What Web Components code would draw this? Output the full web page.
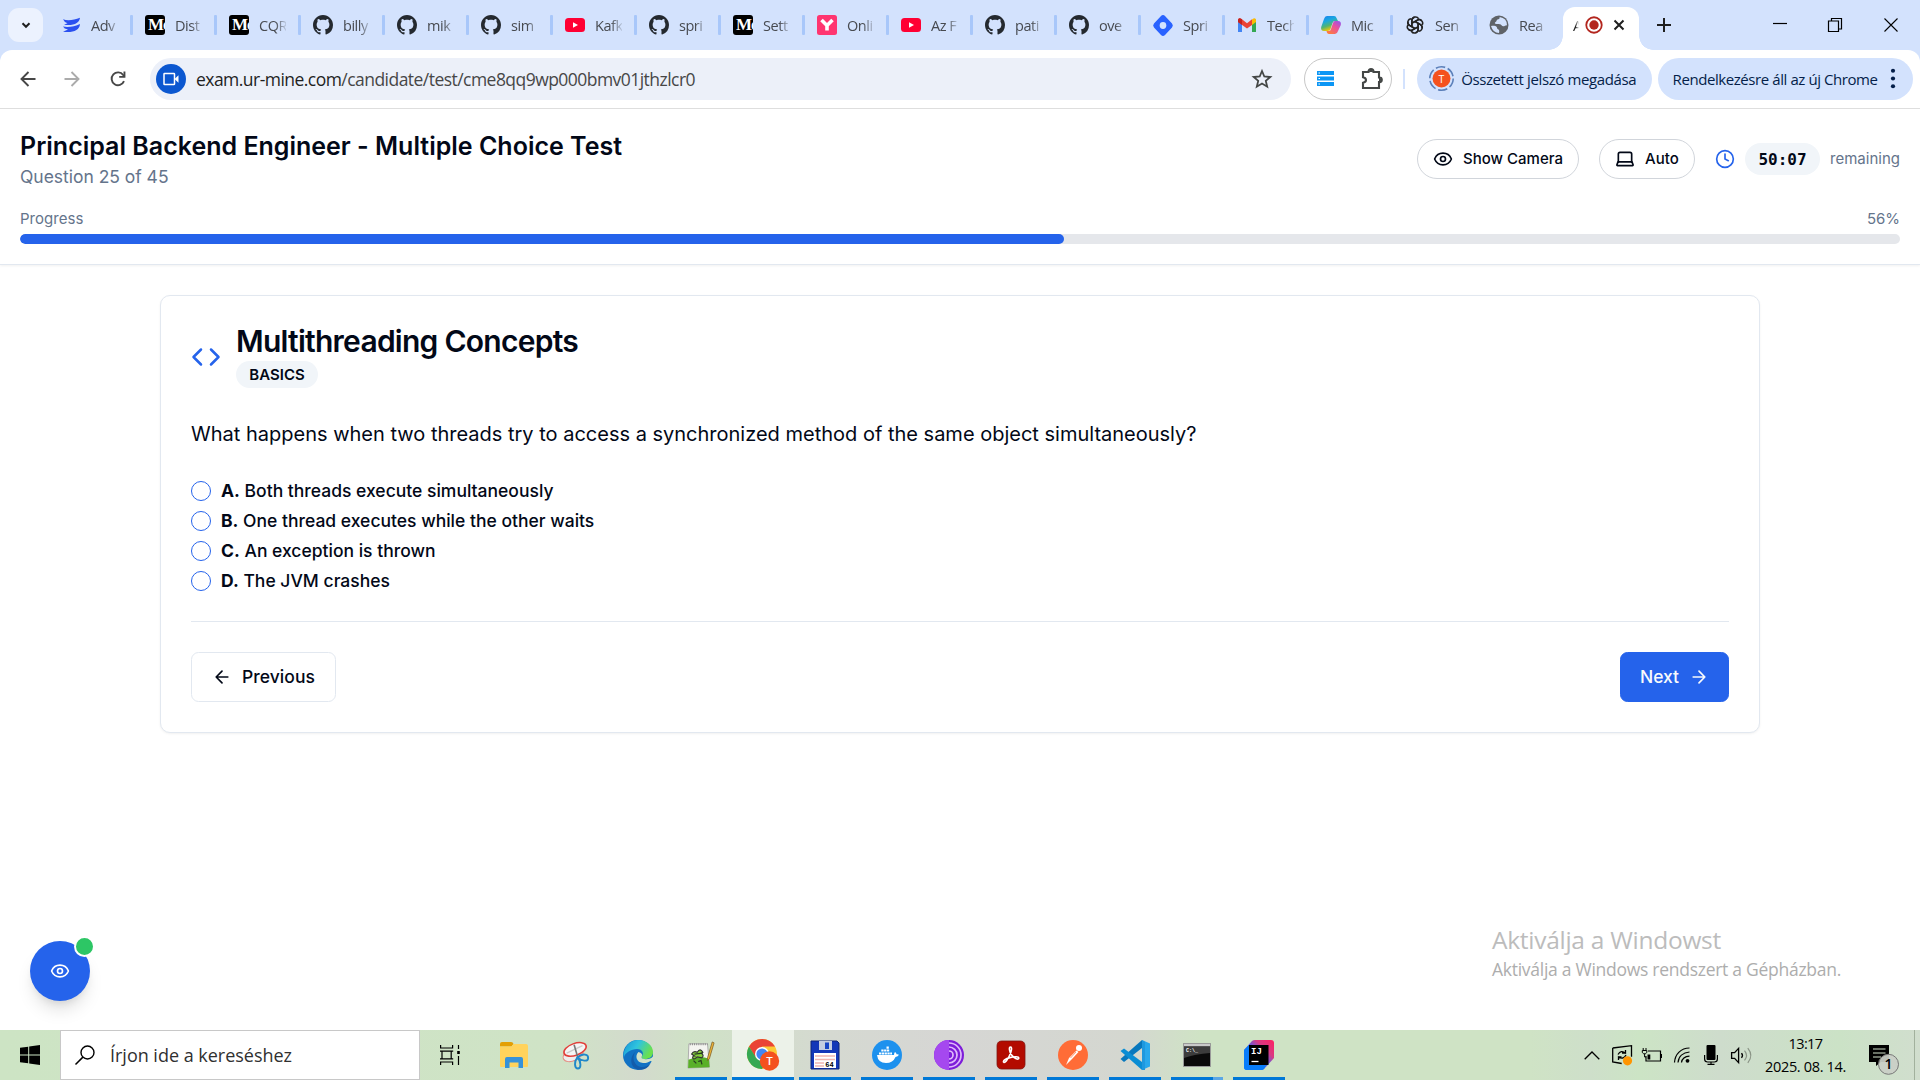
<!DOCTYPE html>
<html lang="hu">
<head>
<meta charset="utf-8">
<title>Principal Backend Engineer - Multiple Choice Test</title>
<style>
html,body{margin:0;height:100%;overflow:hidden;background:#fff}
</style>
</head>
<body>
<desktop-screen></desktop-screen>
<script>
const SEG = '"Open Sans","Noto Sans",sans-serif';
const INTER = 'Inter,"Liberation Sans",sans-serif';
const L = (p, sw = 2) => `<g fill="none" stroke="currentColor" stroke-width="${sw}" stroke-linecap="round" stroke-linejoin="round">${p}</g>`;
const ICONS = {
  chevron: ['0 0 24 24', '<path d="M5 8.500l7 7 7-7" fill="none" stroke="currentColor" stroke-width="4"/>'],
  confluence: ['0 0 20 20', '<path d="M2 4.300C7 6.200 13 5 19 2.800 18.500 8 13 11 3 9.800L6.500 8.200Q3 7 2 4.300z" fill="#2a50f0"/><path d="M2 11.500C7 12.500 14 11.500 19 9 18.500 15.500 12 18 2 16.800L7 14.600Q3 13.800 2 11.500z" fill="#2a50f0"/>'],
  github: ['0 0 16 16', '<path fill="#24292f" d="M8 0C3.580 0 0 3.580 0 8c0 3.540 2.290 6.530 5.470 7.590.4.070.55-.17.55-.38 0-.19-.010-.82-.010-1.490-2.010.37-2.530-.49-2.690-.94-.09-.23-.48-.94-.82-1.130-.28-.15-.68-.52-.010-.53.63-.010 1.080.58 1.230.82.72 1.210 1.870.87 2.330.66.070-.52.28-.87.51-1.070-1.780-.2-3.640-.89-3.640-3.950 0-.87.31-1.590.82-2.150-.080-.2-.36-1.020.080-2.120 0 0 .67-.21 2.200.82.64-.18 1.320-.27 2-.27s1.360.09 2 .27c1.530-1.040 2.200-.82 2.200-.82.44 1.100.16 1.920.080 2.120.51.56.82 1.270.82 2.150 0 3.070-1.870 3.750-3.650 3.950.29.25.54.73.54 1.480 0 1.070-.010 1.930-.010 2.200 0 .21.15.46.55.38A8.013 8.013 0 0 0 16 8c0-4.420-3.580-8-8-8z"/>'],
  youtube: ['0 0 20 20', '<rect y="3" width="20" height="14" rx="3.500" fill="#ff0033"/><path d="M8 7.200v5.600l5-2.800z" fill="#fff"/>'],
  ybox: ['0 0 20 20', '<rect width="20" height="20" rx="2.500" fill="#ff3570"/><path d="M4.500 5 10 10.500 15.500 5M10 10v5.500" stroke="#fff" stroke-width="3.600" fill="none"/>'],
  jira: ['0 0 20 20', '<path d="M10 0q1.200 0 2 .9l7 7.200q1.700 1.900 0 3.800l-7 7.200q-2 1.800-4 0L1 11.900q-1.700-1.900 0-3.800L8 .9q.8-.9 2-.9z" fill="#2962ff"/><circle cx="10" cy="10" r="3.300" fill="#d3e2fd"/>'],
  gmail: ['0 0 20 20', '<path d="M1 4v13h4V9z" fill="#4285f4"/><path d="M15 9v8h4V4z" fill="#34a853"/><path d="M15 4.500V10l4-3V5q-.5-3-4-.5z" fill="#fbbc04"/><path d="M1 5v2l9 6.500L15 10V4.300L10 8.200 5 4.300Q1.500 2 1 5z" fill="#ea4335"/><path d="M1 5v2l4 3V4.300Q1.500 2 1 5z" fill="#c5221f"/>'],
  copilot: ['0 0 20 20', '<defs><linearGradient id="a" x2=".4" y2="1"><stop stop-color="#1a7ef0"/><stop offset=".4" stop-color="#1aa8e0"/><stop offset=".7" stop-color="#52b471"/><stop offset="1" stop-color="#ffc800"/></linearGradient><linearGradient id="b" x1="1" x2=".2" y2="1"><stop stop-color="#8b55f5"/><stop offset=".45" stop-color="#e8509f"/><stop offset="1" stop-color="#ff7f3a"/></linearGradient></defs><path d="M6 1h7q2 0 2.500 2L17 6h-3q-2 0-2.500 2L9.500 14q-.5 2-3 2H3q-3.500 0-2.800-4L3 4q.8-3 3-3z" fill="url(#a)"/><path d="M14 6h3q3.500 0 2.800 4L17 16q-.8 3-3 3H8q-2 0-2.500-3H8q1.600 0 2-2l2-6q.6-2 2-2z" fill="url(#b)"/>'],
  openai: ['0 0 24 24', '<g fill="none" stroke="#222" stroke-width="1.800">' + [0,60,120,180,240,300].map(a => `<path transform="rotate(${a} 12 12)" d="M8.300 14V6.500a4.300 4.300 0 0 1 8-2M8.300 9.800l6.500-3.700a4.300 4.300 0 0 1 5 .6"/>`).join('') + '</g>'],
  globe: ['0 0 20 20', '<circle cx="10" cy="10" r="9.500" fill="#5f6368"/><path d="M2 11c2-.5 4.500-.4 5.500.7s.2 2 1.500 2.600 1.500 1.200 1 3.700Q4 18 2 11zM10.500 2c.8 1.500-.8 2.200-2 2.500s-.7 2-1.900 2.600S5.500 9 7.500 9s4-.2 5 1.300 2.500 1 3.500.4 1.500-.2 2-.5Q18 3 10.500 2z" fill="#d3e2fd"/>'],
  record: ['0 0 20 20', '<circle cx="10" cy="10" r="8.600" fill="none" stroke="#b3261e" stroke-width="2"/><circle cx="10" cy="10" r="5.200" fill="#b3261e"/>'],
  close: ['0 0 12 12', '<path d="M1.500 1.500l9 9m0-9l-9 9" stroke="currentColor" stroke-width="2"/>'],
  plus: ['0 0 14 14', '<path d="M7 0v14M0 7h14" stroke="currentColor" stroke-width="2"/>'],
  minimize: ['0 0 14 14', '<path d="M0 5.500h14" stroke="#000" stroke-width="1.200"/>'],
  restore: ['0 0 14 14', '<path d="M.5 3h10v10.500H.5zM3.500 3V.5h10V11h-3" fill="none" stroke="#000" stroke-width="1.200"/>'],
  winclose: ['0 0 14 14', '<path d="M.5.5l13 13m0-13l-13 13" stroke="#000" stroke-width="1.100"/>'],
  back: ['0 0 16 16', '<path d="M15.500 8H1.500M8.500 1 1.500 8l7 7" fill="none" stroke="currentColor" stroke-width="1.900"/>'],
  forward: ['0 0 16 16', '<path d="M.5 8h14M7.500 1l7 7-7 7" fill="none" stroke="currentColor" stroke-width="1.900"/>'],
  reload: ['0 0 16 16', '<path d="M14 10.200A6.400 6.400 0 1 1 13.200 4l1.300 1.600" fill="none" stroke="currentColor" stroke-width="1.900"/><path d="M15.400.5v6.300H9.200V5h4.300V.5z" fill="currentColor"/>'],
  video: ['0 0 16 14', '<rect x="1" y="1.500" width="10.500" height="11" rx=".6" fill="none" stroke="#fff" stroke-width="1.500"/><path d="M12 6.500l3.500-3.300v7.600L12 7.500z" fill="#fff"/>'],
  star: ['0 0 20 20', '<path d="M10 2l2.300 5.500 6 .5-4.500 3.900 1.400 5.800-5.200-3.100-5.200 3.100 1.400-5.800L1.700 8l6-.5z" fill="none" stroke="#444746" stroke-width="1.800"/>'],
  list: ['0 0 17 15', '<path d="M0 2h17M0 7.500h17M0 13h17" stroke="#0b96f5" stroke-width="3.800"/><path d="M1.500 2H3M1.500 7.500H3M1.500 13H3" stroke="#fff" stroke-width="1.200"/>'],
  puzzle: ['0 0 22 22', '<path d="M2 4h5.500V3.500a2.500 2.500 0 0 1 5 0V4H18v5.500h.5a2.300 2.300 0 0 1 0 4.600H18V20H2v-5.200c4-.8 4-4.800 0-5.600z" fill="none" stroke="#444746" stroke-width="2.100"/><path d="M8 4a2 2.400 0 0 1 4 0zM18 9.800a2.200 2 0 0 1 0 4z" fill="#444746"/>'],
  dots: ['0 0 6 22', '<g fill="#041e49"><circle cx="3" cy="3" r="2.100"/><circle cx="3" cy="11" r="2.100"/><circle cx="3" cy="19" r="2.100"/></g>'],
  eye: ['0 0 24 24', L('<path d="M2.060 12.350a1 1 0 0 1 0-.7 10.750 10.750 0 0 1 19.880 0 1 1 0 0 1 0 .7 10.750 10.750 0 0 1-19.880 0"/><circle cx="12" cy="12" r="3"/>')],
  laptop: ['0 0 24 24', L('<path d="M20 16V6a2 2 0 0 0-2-2H6a2 2 0 0 0-2 2v10"/><path d="M3.500 15.500h17l1.200 3.300a.9.9 0 0 1-.8 1.200H3.100a.9.9 0 0 1-.8-1.200z"/>')],
  clock: ['0 0 24 24', L('<circle cx="12" cy="12" r="10"/><path d="M12 6v6l4 2"/>')],
  code: ['0 0 24 24', L('<path d="M16 18l6-6-6-6M8 6l-6 6 6 6"/>')],
  arrowL: ['0 0 24 24', L('<path d="M12 19l-7-7 7-7M19 12H5"/>')],
  arrowR: ['0 0 24 24', L('<path d="M5 12h14M12 5l7 7-7 7"/>')],
  windows: ['0 0 20 20', '<path d="M0 2.800 8.200 1.700v7.800H0zM9.200 1.500 20 0v9.500H9.200zM0 10.500h8.200v7.800L0 17.200zM9.200 10.500H20V20L9.200 18.500z"/>'],
  search: ['0 0 20 20', '<circle cx="12.500" cy="7.500" r="6.500" fill="none" stroke="#000" stroke-width="1.400"/><path d="M7.900 12.100.5 19.500" stroke="#000" stroke-width="1.500"/>'],
  taskview: ['0 0 20 20', '<path d="M.6 0v3h12V0M.6 20v-3h12v3M2 6.200h9.200v7.600H2zM18.500 0v4M18.500 11v9M0 6.200h2M11.200 6.200h2M0 13.800h2M11.200 13.800h2" fill="none" stroke="#000" stroke-width="1.200"/><path d="M17.200 6h2.600v3h-2.600z"/>'],
  explorer: ['0 0 28 28', '<path d="M0 3q0-2 2-2h9q2 0 2.500 2l-2 2.500H0z" fill="#e39f04"/><path d="M0 5.500h11.500l2-2.500H26q2 0 2 2v20q0 1-1 1H1q-1 0-1-1z" fill="#ffd35c"/><path d="M5 27v-9q0-2 2-2h14q2 0 2 2v9h-4.500v-5.500h-9V27z" fill="#3692d9"/>'],
  snip: ['0 0 30 30', '<ellipse cx="12" cy="14.500" rx="11.500" ry="6.500" transform="rotate(-25 12 14.500)" fill="#eee" stroke="#e58a80"/><ellipse cx="14" cy="9" rx="12.500" ry="6.300" transform="rotate(-20 14 9)" fill="#f5f5f5" stroke="#e2403b" stroke-width="1.700"/><path d="M5 13l17-8" stroke="#ccc" stroke-width="1.500"/><path d="M13 4l4 14" stroke="#777" stroke-width="1.700"/><path d="M16.500 17.500c6-5 12-3 11.500 1s-7 3-11.500-1c-4 5-3 12 .5 12s4-7-.5-12z" fill="none" stroke="#2088c9" stroke-width="2"/>'],
  edge: ['0 0 30 30', '<defs><linearGradient id="e" x2="1" y2=".4"><stop stop-color="#1793d4"/><stop offset=".5" stop-color="#2fc4df"/><stop offset="1" stop-color="#6ae04e"/></linearGradient></defs><circle cx="15" cy="15" r="15" fill="#1272c4"/><path d="M1 12C3 4 9 0 15 0c9 0 15 6 15 12 0 5-4 7-8 7-3 0-5-1-3-3s1-7-5-7C8 9 2 13 1 17q-1-2 0-5z" fill="url(#e)"/><path d="M13 11c-5 6-2 15 5 16 4 .5 7-1 9.500-3.500-3 6-9 7-13 6C7 27 6 17 13 11z" fill="#135caa"/><path d="M15.500 12c-4 4-2 10.500 4.500 11 3 .2 5.500-.6 7.500-2L31 22l-.5-6q-3 3.500-8 3.300c-4-.2-4.500-1.600-3.500-3.200q1-2.600-3.500-4.100z" fill="#d2e1c9"/>'],
  npp: ['0 0 30 30', '<path d="M2 3h20l2 25-23 1z" fill="#f4f4f0" stroke="#aaa"/><path d="M3 3.500h19" stroke="#888" stroke-width="2" stroke-dasharray="1 1.300"/><path d="M1.500 20q12-5 22-1l.7 9-23 .8z" fill="#59b028"/><path d="M5 14q2-4 6-2 3-5 6 0l-2 1q4 2 1 5l-5-1q-4 4-5 1 0-2 2-2-3-2-3-2z" fill="#86cf39" stroke="#333" stroke-width="1.200"/><path d="M8 14l9-1M7 21l3 3M12 22l3-1 1 4" stroke="#263b21" stroke-width="1.300" fill="none"/><path d="M27 1l2 1-5 17-2 2v-3z" fill="#efb434" stroke="#7b5b28" stroke-width=".8"/>'],
  chrome: ['0 0 32 32', '<circle cx="15" cy="15" r="15" fill="#fcc934"/><path d="M2 7.500A15 15 0 0 1 28 7.500H15L9 19z" fill="#ea4335"/><path d="M2 7.500A15 15 0 0 0 15 30l6.500-11.500H9z" fill="#34a853"/><circle cx="15" cy="15" r="7" fill="#fff"/><circle cx="15" cy="15" r="5.600" fill="#4285f4"/><circle cx="22.500" cy="22" r="9.700" fill="#f4511e"/><text x="22.500" y="26.200" fill="#fff" font-family="Open Sans" font-weight="600" font-size="11.500" text-anchor="middle">T</text>'],
  floppy: ['0 0 28 28', '<path d="M0 0h26l2 2v26H0z" fill="#1237b8" stroke="#0c2477"/><path d="M8 0h13v9H8z" fill="#c3cde0"/><path d="M14 1.500h4V8h-4z" fill="#1745c5"/><path d="M3 12h22v15H3z" fill="#fff"/><path d="M4 15h20M4 18.500h20M4 22h9M4 25h9" stroke="#f0b5b0" stroke-width="1.300"/><text x="18.500" y="25.500" text-anchor="middle" font-size="7" font-weight="700" font-family="Liberation Mono">64</text>'],
  docker: ['0 0 30 30', '<circle cx="15" cy="15" r="15" fill="#1d91ee"/><path d="M5 15h17q0-2 1-3 1.500 1 1.500 2.300 1.500-.3 2.500.4-1 2-3.500 2.200Q21 23 14 23q-8 0-9-8z" fill="#fff"/><path d="M7 13.500h13M9.300 10.500h8M14.500 7.700h2.500" stroke="#fff" stroke-width="2.200" stroke-dasharray="2.300 .5"/>'],
  tor: ['0 0 30 30', '<circle cx="15" cy="15" r="15" fill="#7d1cd9"/><path d="M15 0a15 15 0 0 0 0 30z" fill="#a548ef"/><path d="M15 3a12 12 0 0 1 0 24M15 7a8 8 0 0 1 0 16M15 11a4 4 0 0 1 0 8" fill="none" stroke="#e0b9fb" stroke-width="1.700"/>'],
  acrobat: ['0 0 30 30', '<rect x="1" y="1" width="28" height="28" rx="4.500" fill="#b30b00" stroke="#7f1712" stroke-width=".8"/><path d="M14.500 7c2 0 .8 5-1.200 9-2 4.200-4.200 7-5.500 6.200-1.300-1 1.500-3.500 6-4.600s9-1.200 9 .6c0 2-4.500.5-7.200-3.200-2.200-3-3-8-1.100-8z" fill="none" stroke="#fff" stroke-width="1.600"/>'],
  postman: ['0 0 30 30', '<circle cx="15" cy="15" r="15" fill="#ff6c37"/><circle cx="21" cy="8" r="3" fill="#fff"/><path d="M18.500 10.500l2 1.500L14 19l-6 6 3-7z" fill="#fff"/><path d="M12.500 18l5.500-6" stroke="#ff9b76"/>'],
  vscode: ['0 0 30 30', '<path d="M22 0l8 3.500v23L22 30z" fill="#29a8ec"/><path d="M22 0v8L4 22l-3.500-3z" fill="#0878bd"/><path d="M22 30v-8L4 8.500.5 11z" fill="#0a8dd4"/><path d="M22 0v30l3 0V2z" fill="#1f98de"/>'],
  cmd: ['0 0 28 24', '<path d="M.5.5h27v23H.5z" fill="#0a0a0a" stroke="#999"/><path d="M1 1h26v2.500H1z" fill="#c9c9c9"/><path d="M1 3.500h26V10Q12 11 1 15z" fill="#3c3c3c"/><text x="3" y="8.500" font-size="5" font-weight="700" font-family="Liberation Mono" fill="#fff">C:\\_</text>'],
  intellij: ['0 0 30 30', '<defs><linearGradient id="i" x1="1" x2="0" y2="1"><stop stop-color="#ff2161"/><stop offset=".3" stop-color="#d83a83"/><stop offset=".5" stop-color="#5c5be8"/><stop offset="1" stop-color="#087cfa"/></linearGradient></defs><path d="M8 1q1-1 3-1h16q3 0 3 3v15L20 29q-1 1-3 1H3q-3 0-3-3V10z" fill="url(#i)"/><path d="M0 10l5-5v20h17l-2 4q-1 1-3 1H3q-3 0-3-3z" fill="#087cfa"/><path d="M5 5h19.500v20H5z"/><path d="M7.500 21.500h7" stroke="#fff" stroke-width="1.300"/><text x="7" y="14" font-size="9" font-weight="700" font-family="Liberation Mono" fill="#fff">IJ</text>'],
  trayup: ['0 0 16 9', '<path d="M.7 8.300 8 1l7.300 7.300" fill="none" stroke="#000" stroke-width="1.300"/>'],
  sync: ['0 0 21 21', '<path d="M.7 3 19.500.7v11M.7 3v14l9 1.500" fill="none" stroke="#000" stroke-width="1.300"/><path d="M6 9.500q3-5 7.500-1.500V5M13.500 8H10M14 10q-2.500 5-7.500 2v3M6.500 12h3" fill="none" stroke="#000" stroke-width="1.300"/><circle cx="15.500" cy="15.800" r="4.600" fill="#ff9500"/>'],
  battery: ['0 0 20 14', '<path d="M6 3h12.500v10H4V8" fill="none" stroke="#000" stroke-width="1.200"/><path d="M19.300 6v4" stroke="#000" stroke-width="1.400"/><path d="M5.500 6.500h2.800v5H5.500z"/><path d="M1.200 0v2M4 0v2M.3 2.500h4.500v1.800L3.500 5.800H1.700L.3 4.500zM2.600 6v3H4" fill="none" stroke="#000"/>'],
  wifi: ['0 0 16 16', '<g fill="none" stroke="#000" stroke-width="1.200"><path d="M.5 15.500C1 7 7 1 15.500 1"/><path d="M4 15.500c.5-6 5-10 11.500-10.500"/><path d="M7.500 15.500c.5-3.500 3-6 8-6.300"/></g><circle cx="13.500" cy="13.800" r="1.900"/>'],
  mic: ['0 0 14 20' , '<rect x="2.500" width="9" height="15" rx="1"/><path d="M.6 10v4q0 3 3 3h6.800q3 0 3-3v-4M7 17v2.500M3.500 19.400h7" fill="none" stroke="#000" stroke-width="1.200"/>'],
  speaker: ['0 0 21 18', '<path d="M.6 6h3l4-4.500v15L3.600 12h-3zM10.500 6.500q2 2.500 0 5" fill="none" stroke="#000" stroke-width="1.300"/><path d="M13.500 3.800q4 5.200 0 10.400M16.800 1.200q6 7.800 0 15.600" fill="none" stroke="#8a9486" stroke-width="1.200"/>'],
  notes: ['0 0 31 30', '<path d="M0 0h20v17h-8l-5 4v-4H0z"/><path d="M4 4h12.500M4 8h12.500M4 12h8" stroke="#cfe0ca" stroke-width="1.200"/><circle cx="19.500" cy="19.300" r="10" fill="#c9cfc6" fill-opacity=".93" stroke="#777" stroke-width="1"/><text x="19.500" y="24.300" text-anchor="middle" font-family="Open Sans" font-weight="600" font-size="14">1</text>'],
};

class Base extends HTMLElement {
  constructor() { super(); this.attachShadow({ mode: 'open' }); }
  at(n, d) { return this.hasAttribute(n) ? this.getAttribute(n) : d; }
  connectedCallback() { this.shadowRoot.innerHTML = `<style>*{box-sizing:border-box}${this.css()}</style>${this.html()}`; this.ready && this.ready(); }
}
const def = (n, css, html) => customElements.define(n, class extends Base {
  css() { return typeof css === 'function' ? css(this) : css; }
  html() { return typeof html === 'function' ? html(this) : html; }
});

def('ui-icon', e => `:host{display:inline-block;flex:none;width:${e.at('w', 20)}px;height:${e.at('h', e.at('w', 20))}px}svg{display:block;width:100%;height:100%;overflow:visible}`,
  e => { const i = ICONS[e.at('name')]; return `<svg viewBox="${i[0]}" preserveAspectRatio="none">${i[1]}</svg>`; });

/* Single-line text whose tracking is tuned so that it spans the width given in "w". */
customElements.define('ui-text', class extends Base {
  css() { return `:host{display:block;flex:none;white-space:pre;font-size:${this.at('size', 16)}px;font-weight:${this.at('weight', 400)};line-height:${this.at('lh', 20)}px}span{display:inline-block}`; }
  html() { return '<span><slot></slot></span>'; }
  ready() {
    const w = +this.at('w', 0); if (!w) return;
    const s = this.shadowRoot.querySelector('span'), n = this.textContent.length;
    const d = (w - s.getBoundingClientRect().width) / n;
    s.style.letterSpacing = d + 'px';
  }
});

def('medium-logo', ':host{display:flex;width:20px;height:20px;background:#000;border-radius:3px;color:#fff;font:700 17px/20px "Liberation Serif",serif;overflow:hidden;padding-left:3px;box-sizing:border-box;letter-spacing:-1px;flex:none}', '<span>Me</span>');

def('browser-tab', `:host{display:flex;align-items:center;width:84px;height:50px;padding-left:12.3px;box-sizing:border-box;flex:none;color:#474a50}
  .t{margin-left:10px;width:27px;white-space:nowrap;font-size:14.5px;letter-spacing:-.45px;line-height:22px;padding-top:1px;-webkit-mask-image:linear-gradient(90deg,#000 60%,rgba(0,0,0,.15) 100%)}
  i{margin-left:auto;width:2.500px;height:20px;background:#a8c7fa;border-radius:1px}:host([last]) i{display:none}`,
  e => (e.at('icon') === 'medium' ? '<medium-logo></medium-logo>' : `<ui-icon name="${e.at('icon')}" w="20" h="${e.at('icon') === 'jira' ? 21 : 20}"></ui-icon>`) + '<div class="t"><slot></slot></div><i></i>');

def('tab-strip', `:host{display:flex;height:50px;background:#d3e2fd;color:#1f1f1f}
  .s{width:35px;height:34px;border-radius:11px;background:#ecf2fe;margin:8px 5.700px 0 8px;display:flex;align-items:center;justify-content:center;flex:none}
  .a{position:relative;width:76px;height:43px;margin:7px 0 0 2.300px;background:#fff;border-radius:12px 12px 0 0;display:flex;align-items:center;padding:0 0 7px 10px;flex:none}
  .a:before,.a:after{content:"";position:absolute;bottom:0;width:14px;height:14px}
  .a:before{left:-14px;background:radial-gradient(circle at 0 0,transparent 13.500px,#fff 14px)}
  .a:after{right:-14px;background:radial-gradient(circle at 100% 0,transparent 13.500px,#fff 14px)}
  .a b{width:6px;font-weight:400;font-size:15px;-webkit-mask-image:linear-gradient(90deg,#000 40%,transparent)}
  .a ui-icon{margin-left:6px}.a ui-icon+ui-icon{margin-left:10.500px}
  .p{margin:18px 0 0 18px}.w{display:flex;gap:42px;margin:18px 22px 0 auto}.w ui-icon:first-child{margin-right:-1px}`,
  () => { const t = [['confluence','Adv'],['medium','Dist'],['medium','CQR'],['github','billy'],['github','mik'],['github','sim'],['youtube','Kafk'],['github','spri'],['medium','Sett'],['ybox','Onli'],['youtube','Az F'],['github','pati'],['github','ove'],['jira','Spri'],['gmail','Tech'],['copilot','Mic'],['openai','Sen'],['globe','Rea']];
    return '<div class="s"><ui-icon name="chevron" w="12"></ui-icon></div>' + t.map((x, i) => `<browser-tab icon="${x[0]}"${i === 17 ? ' last' : ''}>${x[1]}</browser-tab>`).join('') +
    '<div class="a"><b>A</b><ui-icon name="record" w="18"></ui-icon><ui-icon name="close" w="12"></ui-icon></div><ui-icon class="p" name="plus" w="14"></ui-icon><div class="w"><ui-icon name="minimize" w="14"></ui-icon><ui-icon name="restore" w="14"></ui-icon><ui-icon name="winclose" w="14"></ui-icon></div>'; });

def('tool-bar', `:host{display:block;background:#d3e2fd}
  .b{height:58.500px;background:#fff;border-radius:12px 12px 0 0;border-bottom:1.500px solid #dfdfdf;display:flex;align-items:center;padding:0 7.500px 0 19.500px;color:#474747}
  .o{display:flex;align-items:center;width:1141px;height:42px;border-radius:21px;background:#ecf0f9;margin-left:24.500px;padding:0 18.500px 0 6px}
  .v{width:30px;height:30px;border-radius:50%;background:#0b57d0;display:flex;align-items:center;justify-content:center;margin-right:10px}
  .o>ui-icon{margin-left:auto}b{font-weight:400;color:#1f1f1f}
  .e{width:88px;height:42px;border:1.300px solid #c7c7c7;border-radius:21px;display:flex;align-items:center;margin-left:13px;padding:0 8px 0 12px;justify-content:space-between}
  .d{width:2px;height:20px;background:#d3e2fd;margin:0 12px 0 11px}
  .c{height:42px;border-radius:21px;background:#d3e2fd;color:#041e49;display:flex;align-items:center}
  .av{width:25px;height:25px;display:flex;align-items:center;justify-content:center;margin-right:7px}
  .av svg{width:25px;height:25px}`,
  `<div class="b"><ui-icon name="back" w="16"></ui-icon><ui-icon name="forward" w="16" style="margin-left:28.5px;color:#ababab"></ui-icon><ui-icon name="reload" w="16" style="margin-left:29.5px"></ui-icon>
  <div class="o"><div class="v"><ui-icon name="video" w="16" h="14"></ui-icon></div><ui-text size="17.5" w="499" lh="26">${'<b>exam.ur-mine.com</b>'}/candidate/test/cme8qq9wp000bmv01jthzlcr0</ui-text><ui-icon name="star" w="20"></ui-icon></div>
  <div class="e"><ui-icon name="list" w="17" h="15"></ui-icon><ui-icon name="puzzle" w="22"></ui-icon></div><div class="d"></div>
  <div class="c" style="width:235px;padding-left:12.5px"><div class="av"><svg viewBox="0 0 25 25"><circle cx="12.500" cy="12.500" r="11.700" fill="none" stroke="#5b7fb9" stroke-width="1.600" stroke-dasharray="9.500 2.750"/><circle cx="12.500" cy="12.500" r="9" fill="#f4511e"/><text x="12.500" y="16.500" font-size="10.500" font-family="Open Sans" fill="#fff" text-anchor="middle">T</text></svg></div><ui-text size="15" w="175" lh="22">Összetett jelszó megadása</ui-text></div>
  <div class="c" style="width:255px;margin-left:6px;padding-left:15px"><ui-text size="15" w="205" lh="22">Rendelkezésre áll az új Chrome</ui-text><ui-icon name="dots" w="6" h="21" style="margin-left:12px"></ui-icon></div></div>`);

def('pill-button', ':host{display:flex;align-items:center;height:40px;border:1.250px solid #d1d5db;border-radius:20px;padding:0 15px;gap:10px;color:#020817;background:#fff}', '<slot></slot>');

def('exam-header', `:host{display:block;height:156.500px;box-sizing:border-box;padding:20.500px 20px 0;border-bottom:1.250px solid #e2e8f0;box-shadow:0 1px 2.500px rgba(0,0,0,.06);color:#020817;font-family:${INTER};background:#fff}
  .r{display:flex;justify-content:space-between;align-items:center}.g{display:flex;align-items:center}
  .m{color:#64748b}.t{height:32px;border-radius:16px;background:#f1f5f9;width:75px;display:flex;align-items:center;justify-content:center;font-family:"DejaVu Sans Mono","Liberation Mono",monospace;margin:0 10px;padding-top:2px}
  .bar{height:10px;border-radius:5px;background:#e5e7eb;overflow:hidden;margin-top:5px}.bar div{width:1044px;height:10px;border-radius:5px;background:#2563eb}`,
  `<div class="r"><div><ui-text size="25" weight="600" lh="35" w="602">Principal Backend Engineer - Multiple Choice Test</ui-text><ui-text class="m" size="17.5" lh="25" w="148.5">Question 25 of 45</ui-text></div>
  <div class="g"><pill-button style="margin-right:20px"><ui-icon name="eye" w="20"></ui-icon><ui-text size="15" weight="500" w="100">Show Camera</ui-text></pill-button><pill-button style="margin-right:20px"><ui-icon name="laptop" w="20"></ui-icon><ui-text size="15" weight="500" w="34">Auto</ui-text></pill-button><ui-icon name="clock" w="20" style="color:#2563eb"></ui-icon><div class="t"><ui-text size="16" weight="700" w="48">50:07</ui-text></div><ui-text class="m" size="15" w="70">remaining</ui-text></div></div>
  <div class="r m" style="margin-top:20px"><ui-text size="15" w="63.5">Progress</ui-text><ui-text size="15" w="33">56%</ui-text></div><div class="bar"><div></div></div>`);

def('answer-option', ':host{display:flex;align-items:center;height:20px;gap:10px;margin-bottom:10px}i{width:20px;height:20px;border:1.250px solid #2563eb;border-radius:50%;box-sizing:border-box}', e => `<i></i><ui-text size="17.5" weight="500" w="${e.at('w')}"><b>${e.at('key')}.</b> ${e.textContent}</ui-text>`);

def('nav-button', ':host{display:flex;align-items:center;justify-content:center;height:50px;gap:10px;border-radius:7.500px;border:1.250px solid #e2e8f0;box-sizing:border-box;color:#020817}:host([primary]){background:#2563eb;border-color:#2563eb;color:#f8fafc}', '<slot></slot>');

def('question-card', `:host{display:block;width:1600px;height:438px;box-sizing:border-box;border:1.250px solid #e2e8f0;border-radius:10px;padding:30px 30px 0;margin:30px auto 0;box-shadow:0 1px 2.500px rgba(0,0,0,.06);background:#fff;color:#020817;font-family:${INTER}}
  .h{display:flex;gap:15px;align-items:center}.bd{display:flex;align-items:center;height:27px;border-radius:14px;background:#f1f5f9;width:82px;justify-content:center;margin-top:5px}
  .f{display:flex;justify-content:space-between;border-top:1.250px solid #e2e8f0;padding-top:30px;margin-top:30px}`,
  `<div class="h"><ui-icon name="code" w="30" style="color:#2563eb"></ui-icon><div><ui-text size="30" weight="600" lh="30" w="342">Multithreading Concepts</ui-text><div class="bd"><ui-text size="15" weight="600" w="55.5">BASICS</ui-text></div></div></div>
  <div style="padding:30px 0 31px"><ui-text size="20" lh="32" w="1005.5">What happens when two threads try to access a synchronized method of the same object simultaneously?</ui-text></div>
  <answer-option key="A" w="332.5">Both threads execute simultaneously</answer-option><answer-option key="B" w="373.3">One thread executes while the other waits</answer-option><answer-option key="C" w="214.5">An exception is thrown</answer-option><answer-option key="D" w="169">The JVM crashes</answer-option>
  <div class="f"><nav-button style="width:145px"><ui-icon name="arrowL" w="20"></ui-icon><ui-text size="17.5" weight="500" w="73">Previous</ui-text></nav-button><nav-button primary style="width:109px"><ui-text size="17.5" weight="500" w="39">Next</ui-text><ui-icon name="arrowR" w="20"></ui-icon></nav-button></div>`);

def('camera-fab', `:host{position:absolute;left:30px;top:941px;width:60px;height:60px;border-radius:50%;background:#2563eb;color:#fff;display:flex;align-items:center;justify-content:center;box-shadow:0 12px 18px -4px rgba(0,0,0,.13),0 5px 8px -4px rgba(0,0,0,.1)}
  i{position:absolute;right:-5px;top:-5.500px;width:21px;height:21px;border-radius:50%;border:2.500px solid #fff;background:#2dc665}`, '<ui-icon name="eye" w="20"></ui-icon><i></i>');

def('activation-note', ':host{position:absolute;left:1492px;top:921px;display:block}', '<ui-text size="24.5" lh="37" w="229" style="color:#bcbcbc">Aktiválja a Windowst</ui-text><ui-text size="17.5" lh="22" w="349" style="color:#adadad">Aktiválja a Windows rendszert a Gépházban.</ui-text>');

def('task-app', `:host{display:flex;flex-direction:column;align-items:center;justify-content:center;width:62px;height:50px;position:relative;flex:none}
  :host([run]):after{content:"";position:absolute;bottom:0;left:5px;right:5px;height:3px;background:#0078d7}
  :host([active]){background:#ecf2e9}:host([active]):after{left:0;right:0}
  :host([multi]):after{background:linear-gradient(90deg,#0078d7 80%,#5ba7e5 80%)}`,
  e => `<ui-icon name="${e.at('icon')}" w="${e.at('w', 30)}" h="${e.at('h', e.at('w', 30))}"></ui-icon>`);

def('task-bar', `:host{display:flex;height:50px;background:linear-gradient(90deg,#cde4c4 0,#cfe3c6 560px,#d3dacd 640px,#cfe2c6 690px,#d5d9d1 830px,#d6d6d4 950px,#d4d7d0 1130px,#cfe3c5 1200px,#cfe3c5 1530px,#cedfca 1590px,#cce4c5 1640px,#cedccc 1720px,#cbe2c6 1840px,#d1dece 1920px);color:#000}
  .st{width:60px;display:flex;align-items:center;justify-content:center}
  .se{width:360px;border:1px solid #c8c8c8;background:#fff;display:flex;align-items:center;gap:15px;padding-left:14px;color:#303030}
  .tv{width:60px;display:flex;align-items:center;padding-left:20px}
  .tr{display:flex;margin-left:auto;align-items:center;height:50px}.ck{display:flex;flex-direction:column;align-items:center;width:82px;margin:0 22.500px 0 12.500px}
  .tr u{width:1px;height:50px;background:#a2b19d;margin-left:14px;margin-right:5px}`,
  `<div class="st"><ui-icon name="windows" w="20"></ui-icon></div><div class="se"><ui-icon name="search" w="20"></ui-icon><ui-text size="18" w="182" lh="26">Írjon ide a kereséshez</ui-text></div>
  <div class="tv"><ui-icon name="taskview" w="20"></ui-icon></div><div style="width:3px"></div>
  <task-app icon="explorer" w="28"></task-app><task-app icon="snip" w="28"></task-app><task-app icon="edge" style="margin-right:1px"></task-app><task-app run icon="npp" w="28"></task-app><task-app run active icon="chrome" w="32"></task-app><task-app run icon="floppy" w="28"></task-app><task-app run icon="docker"></task-app><task-app run icon="tor"></task-app><task-app run icon="acrobat"></task-app><task-app run icon="postman"></task-app><task-app run icon="vscode"></task-app><task-app run multi icon="cmd" w="28" h="24"></task-app><task-app run icon="intellij"></task-app>
  <div class="tr"><ui-icon name="trayup" w="16" h="9"></ui-icon><ui-icon name="sync" w="21" style="margin-left:12px"></ui-icon><ui-icon name="battery" w="20" h="14" style="margin-left:9px"></ui-icon><ui-icon name="wifi" w="16" style="margin-left:12px"></ui-icon><ui-icon name="mic" w="14" h="20" style="margin-left:14px"></ui-icon><ui-icon name="speaker" w="21" h="17" style="margin-left:13px"></ui-icon>
  <div class="ck"><ui-text size="14.5" w="34" lh="23">13:17</ui-text><ui-text size="14.5" w="81" lh="23">2025. 08. 14.</ui-text></div><ui-icon name="notes" w="31" h="30" style="margin-top:10px"></ui-icon><u></u></div>`);

def('desktop-screen', `:host{position:relative;display:flex;flex-direction:column;width:1920px;height:1080px;overflow:hidden;font-family:${SEG};background:#fff}task-bar{margin-top:auto}`,
  '<tab-strip></tab-strip><tool-bar></tool-bar><exam-header></exam-header><question-card></question-card><camera-fab></camera-fab><activation-note></activation-note><task-bar></task-bar>');
</script>
</body>
</html>
